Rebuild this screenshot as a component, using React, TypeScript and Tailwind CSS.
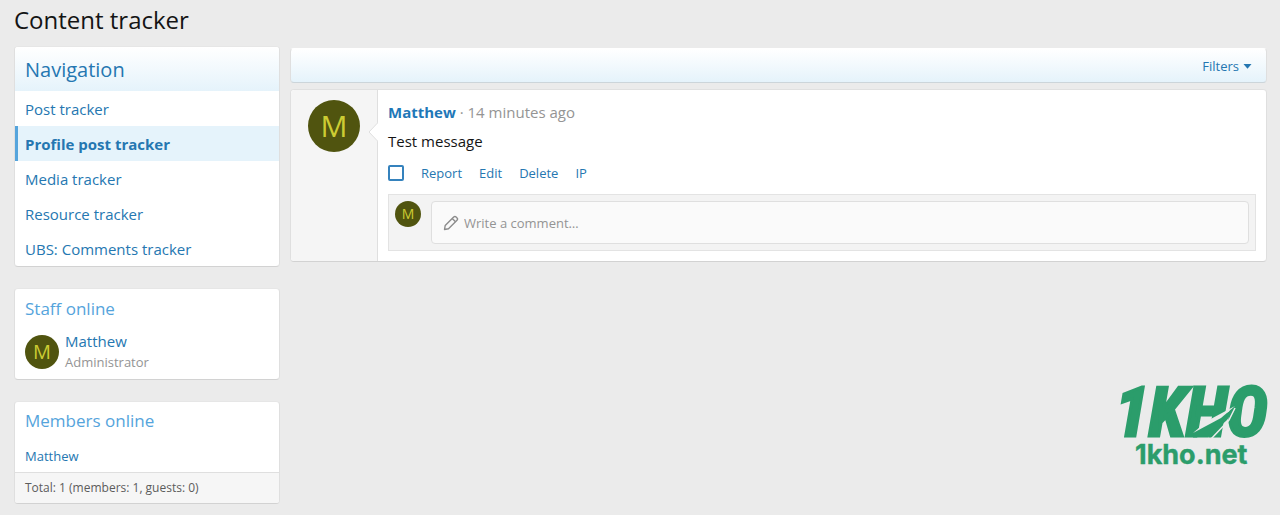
import clsx from "clsx";
import type { ReactNode } from "react";

const navItems = [
  { label: "Post tracker" },
  { label: "Profile post tracker", active: true },
  { label: "Media tracker" },
  { label: "Resource tracker" },
  { label: "UBS: Comments tracker" },
];

const actions = ["Report", "Edit", "Delete", "IP"];

function Avatar({ className }: { className: string }) {
  return (
    <a
      href="#"
      aria-label="Matthew"
      className={clsx(
        "flex shrink-0 items-center justify-center rounded-full bg-[#50540f] text-[#cccc33]",
        className,
      )}
    >
      M
    </a>
  );
}

function Block({ children, className }: { children: ReactNode; className?: string }) {
  return (
    <section
      className={clsx(
        "overflow-hidden rounded-sm border border-t-[#e6e6e6] border-r-[#dfdfdf] border-b-[#d2d2d2] border-l-[#dfdfdf] bg-white",
        className,
      )}
    >
      {children}
    </section>
  );
}

function PencilIcon() {
  return (
    <svg
      viewBox="0 0 16 16"
      className="h-4 w-4 shrink-0"
      fill="none"
      stroke="#8c8c8c"
      strokeWidth="1.4"
      strokeLinejoin="round"
      aria-hidden="true"
    >
      <path d="M1.500 14.500l.7-4L10.700 2a1.700 1.700 0 0 1 2.400 0l.9.900a1.700 1.700 0 0 1 0 2.400L5.500 13.800z" />
      <path d="M9.200 3.500l3.300 3.300" />
    </svg>
  );
}

function Logo() {
  return (
    <svg
      viewBox="0 0 150 90"
      className="h-[90px] w-[150px] overflow-visible"
      role="img"
      aria-label="1KHO 1kho.net"
    >
      <g fill="#2b9d6b" stroke="#2b9d6b">
        <text
          x="-2"
          y="56"
          fontSize="69"
          strokeWidth="3"
          className="font-['Roboto_Condensed',Roboto,sans-serif] font-bold italic"
        >
          1KHO
        </text>
        <text x="18" y="84" fontSize="27" strokeWidth="0.4" className="font-[Inter,sans-serif] font-bold">
          1kho.net
        </text>
      </g>
      <path d="M76 57.500 77 52 118 28 110 40 91 57.500z" fill="#2b9d6b" />
      <path d="M76 53 90 41 118 26 104 38z" fill="#ebebeb" />
      <path d="M94 59 112 40 118 28" fill="none" stroke="#ebebeb" strokeWidth="1.5" />
    </svg>
  );
}

function Sidebar() {
  return (
    <aside className="flex w-[266px] shrink-0 flex-col gap-[21px]">
      <Block>
        <h2 className="bg-linear-to-b from-white to-[#e5f3fb] px-[10px] pt-[9px] pb-[7px] text-xl leading-7">
          Navigation
        </h2>
        <nav aria-label="Navigation">
          {navItems.map((item) => (
            <a
              key={item.label}
              href="#"
              className={clsx(
                "block border-l-3 pt-[6px] pb-1 pl-[7px] text-[15px] leading-[25px]",
                item.active ? "border-[#55a4dc] bg-[#e5f3fb] font-bold" : "border-transparent",
              )}
            >
              {item.label}
            </a>
          ))}
        </nav>
      </Block>

      <Block className="px-[10px] pt-[6px] pb-[6px]">
        <h3 className="text-[17px] leading-7 text-[#55a4dc]">Staff online</h3>
        <div className="mt-2 flex items-center gap-[6px]">
          <Avatar className="h-[34px] w-[34px] text-xl" />
          <div>
            <a href="#" className="block text-[15px] leading-[21px]">
              Matthew
            </a>
            <div className="text-[13px] leading-[21px] text-[#949494]">Administrator</div>
          </div>
        </div>
      </Block>

      <Block>
        <div className="px-[10px] pt-[5px] pb-[6px]">
          <h3 className="text-[17px] leading-7 text-[#55a4dc]">Members online</h3>
          <a href="#" className="mt-[11px] block text-[13px] leading-5">
            Matthew
          </a>
        </div>
        <div className="border-t border-[#dfdfdf] bg-[#f6f6f6] px-[10px] py-[5px] text-xs leading-5 text-[#5c5c5c]">
          Total: 1 (members: 1, guests: 0)
        </div>
      </Block>
    </aside>
  );
}

function Message() {
  return (
    <article className="flex rounded-sm border border-t-[#e0e0e0] border-r-[#dfdfdf] border-b-[#d2d2d2] border-l-[#dfdfdf] bg-white">
      <div className="relative flex w-[87px] shrink-0 justify-center rounded-l-sm border-r border-[#dfdfdf] bg-[#f5f5f5] pt-[10px]">
        <Avatar className="h-[52px] w-[52px] text-3xl" />
        <svg
          viewBox="0 0 10 20"
          className="absolute top-8 -right-px h-5 w-[10px]"
          fill="#fff"
          stroke="#dfdfdf"
          aria-hidden="true"
        >
          <path d="M10 .5 1 10l9 9.500" />
        </svg>
      </div>
      <div className="min-w-0 flex-1 p-[10px]">
        <div className="text-[15px] leading-6 text-[#949494]">
          <a href="#" className="font-bold text-[#1f78b8]">
            Matthew
          </a>{" "}
          · <time>14 minutes ago</time>
        </div>
        <p className="mt-[5px] text-[15px] leading-6 text-[#141414]">Test message</p>
        <div className="mt-2 flex items-center gap-[17px] text-[13px] leading-6">
          <input
            type="checkbox"
            aria-label="Select for moderation"
            className="h-4 w-4 appearance-none rounded-xs border-2 border-[#3582bd] checked:bg-[#3582bd]"
          />
          {actions.map((action) => (
            <a key={action} href="#">
              {action}
            </a>
          ))}
        </div>
        <div className="mt-[9px] flex items-start gap-[10px] border border-[#e3e3e3] bg-[#f3f3f3] p-[6px]">
          <Avatar className="h-[26px] w-[26px] text-sm" />
          <label className="flex h-[43px] flex-1 items-center gap-[5px] rounded-sm border border-[#dfdfdf] bg-[#fafafa] px-[11px]">
            <PencilIcon />
            <input
              type="text"
              aria-label="Write a comment"
              placeholder="Write a comment…"
              className="min-w-0 flex-1 bg-transparent text-[13px] leading-5 outline-none placeholder:text-[#949494]"
            />
          </label>
        </div>
      </div>
    </article>
  );
}

export default function App() {
  return (
    <div className="flex min-h-screen flex-col bg-[#ebebeb] pt-[3px] pr-[13px] pb-[11px] pl-[14px] font-['Open_Sans','Noto_Sans',sans-serif] text-[#2577b1]">
      <h1 className="text-2xl leading-[34px] text-[#141414]">Content tracker</h1>
      <div className="mt-[9px] flex flex-1 gap-[10px]">
        <Sidebar />
        <main className="flex min-w-0 flex-1 flex-col">
          <div className="mt-[2px] flex h-[35px] justify-end rounded-sm border border-t-white border-r-[#dfdfdf] border-b-[#ccd5da] border-l-[#dfdfdf] bg-linear-to-b from-white to-[#e5f3fb] px-[14px]">
            <button type="button" className="flex items-center gap-1 pt-[2px] text-[13px]">
              Filters
              <svg viewBox="0 0 9 5" className="h-[5px] w-[9px]" fill="currentColor" aria-hidden="true">
                <path d="M.5 0h8L4.500 4.800z" />
              </svg>
            </button>
          </div>
          <div className="mt-[6px]">
            <Message />
          </div>
          <div className="mt-auto flex justify-end pb-[34px]">
            <Logo />
          </div>
        </main>
      </div>
    </div>
  );
}
